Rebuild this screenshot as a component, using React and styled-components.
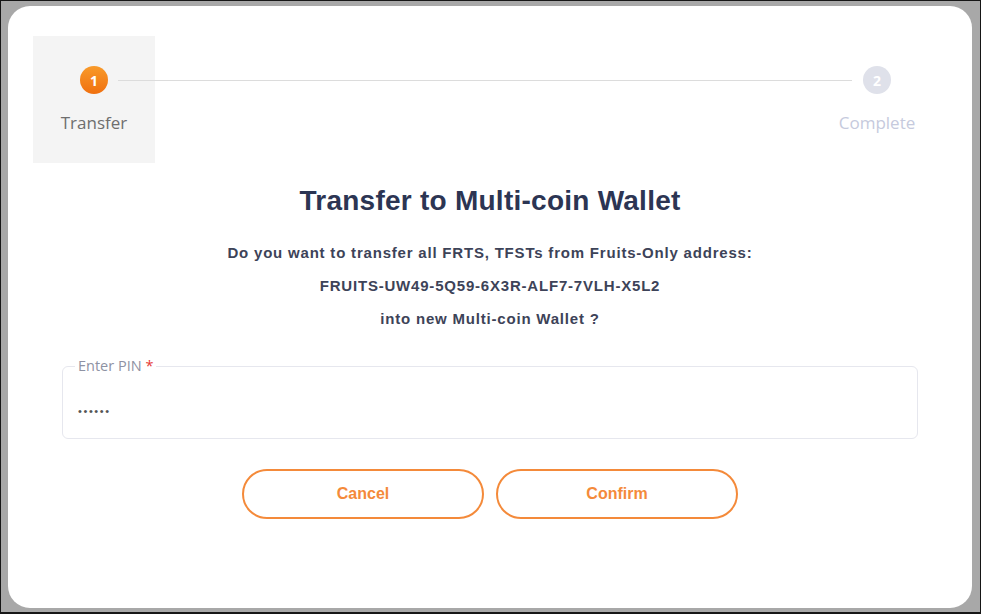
import React from 'react';
import styled, { createGlobalStyle } from 'styled-components';

const GlobalStyle = createGlobalStyle`
  html, body {
    margin: 0;
    padding: 0;
    background: #a8a8a8;
  }
  * {
    box-sizing: border-box;
  }
`;

const Frame = styled.div`
  display: flex;
  width: 981px;
  height: 614px;
  border: 1px solid #161616;
  border-bottom-width: 2px;
  padding: 5px 8px 4px 7px;
  background: #a8a8a8;
`;

const Card = styled.div`
  flex: 1;
  display: flex;
  flex-direction: column;
  align-items: center;
  background: #fff;
  border-radius: 22px;
  padding-top: 30px;
`;

const Stepper = styled.div`
  display: flex;
  align-self: stretch;
  align-items: flex-start;
  margin: 0 34px 0 25px;
`;

const Step = styled.div`
  display: flex;
  flex-direction: column;
  align-items: center;
  width: 122px;
  height: 127px;
  padding-top: 30px;
  background: ${p => (p.$active ? '#f4f4f4' : 'transparent')};
`;

const Circle = styled.div`
  display: flex;
  align-items: center;
  justify-content: center;
  width: 28px;
  height: 28px;
  border-radius: 50%;
  background: ${p =>
    p.$active ? 'linear-gradient(180deg, #f89a2a 0%, #f0700f 100%)' : '#dfe1ea'};
  color: #fff;
  font-family: 'Open Sans', sans-serif;
  font-weight: 700;
  font-size: 14px;
`;

const StepLabel = styled.div`
  margin-top: 17px;
  font-family: 'Open Sans', sans-serif;
  font-size: 17px;
  color: ${p => (p.$active ? '#6e6e6e' : '#c6cadd')};
`;

const Connector = styled.div`
  position: relative;
  flex: 1;
  height: 1px;
  margin: 44px -36px 0 -37px;
  background: #dcdcdc;
`;

const Title = styled.h1`
  margin: 22px 0 0;
  font-family: 'Liberation Sans', Arial, sans-serif;
  font-weight: 700;
  font-size: 28px;
  letter-spacing: 0.25px;
  line-height: 32px;
  color: #2c3553;
`;

const Message = styled.div`
  display: flex;
  flex-direction: column;
  align-items: center;
  gap: 13px;
  margin-top: 26px;
`;

const Line = styled.p`
  margin: 0;
  font-family: 'Liberation Sans', Arial, sans-serif;
  font-weight: 700;
  font-size: 15px;
  letter-spacing: 0.8px;
  line-height: 20px;
  color: #3d4358;
`;

const Field = styled.fieldset`
  align-self: stretch;
  margin: 30px 54px 0;
  padding: 0 12px 17px;
  border: 1px solid #e6e7ee;
  border-radius: 6px;
`;

const Legend = styled.legend`
  padding: 0 3px;
  font-family: 'Open Sans', sans-serif;
  font-size: 14.5px;
  line-height: 14px;
  color: #8e92a3;

  span {
    color: #e53935;
  }
`;

const PinInput = styled.input`
  display: block;
  width: 100%;
  margin-top: 28px;
  padding: 0 3px;
  border: none;
  outline: none;
  background: transparent;
  font-family: 'Liberation Sans', Arial, sans-serif;
  font-size: 11px;
  letter-spacing: 1.6px;
  line-height: 20px;
  color: #555;
`;

const Actions = styled.div`
  display: flex;
  gap: 12px;
  margin-top: 30px;
`;

const Button = styled.button`
  width: 242px;
  height: 50px;
  border: 2px solid #f48a3a;
  border-radius: 25px;
  background: #fff;
  color: #f48a3a;
  font-family: 'Liberation Sans', Arial, sans-serif;
  font-weight: 700;
  font-size: 16px;
  cursor: pointer;
`;

const App = () => {
  return (
    <>
      <GlobalStyle />
      <Frame>
        <Card>
          <Stepper>
            <Step $active>
              <Circle $active>1</Circle>
              <StepLabel $active>Transfer</StepLabel>
            </Step>
            <Connector />
            <Step>
              <Circle>2</Circle>
              <StepLabel>Complete</StepLabel>
            </Step>
          </Stepper>
          <Title>Transfer to Multi-coin Wallet</Title>
          <Message>
            <Line>Do you want to transfer all FRTS, TFSTs from Fruits-Only address:</Line>
            <Line>FRUITS-UW49-5Q59-6X3R-ALF7-7VLH-X5L2</Line>
            <Line>into new Multi-coin Wallet ?</Line>
          </Message>
          <Field>
            <Legend>
              Enter PIN <span>*</span>
            </Legend>
            <PinInput type="password" defaultValue="123456" readOnly />
          </Field>
          <Actions>
            <Button>Cancel</Button>
            <Button>Confirm</Button>
          </Actions>
        </Card>
      </Frame>
    </>
  );
};

export default App;
